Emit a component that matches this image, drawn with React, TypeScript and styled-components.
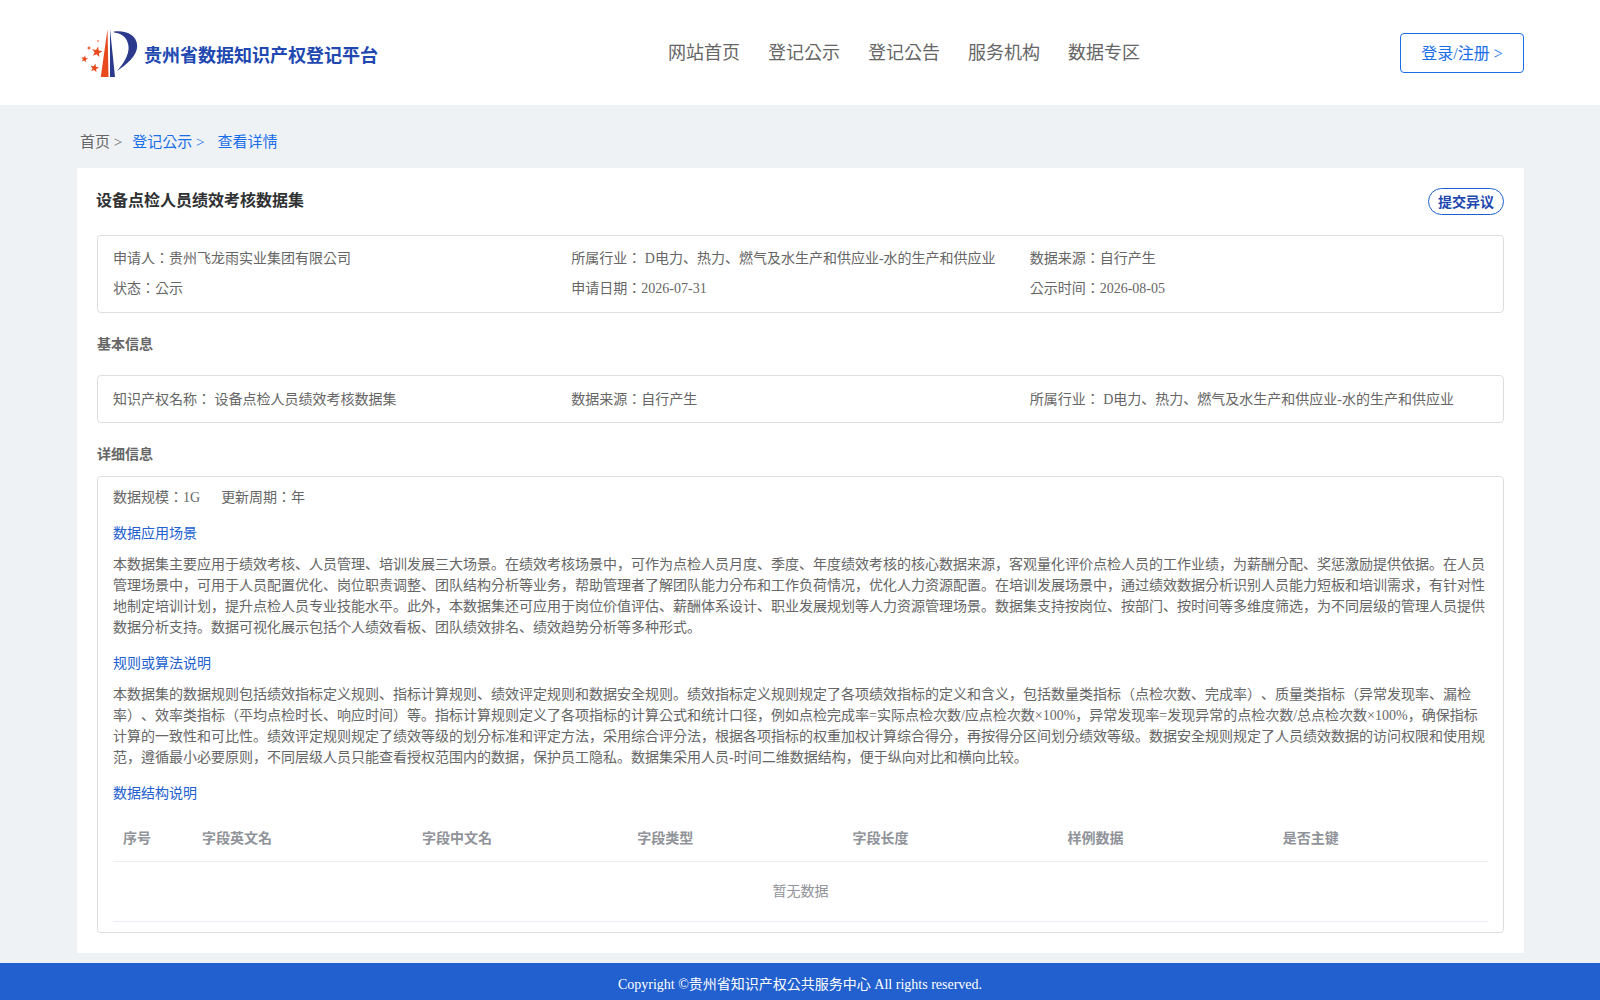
import styled, { createGlobalStyle } from "styled-components";

const tableColumns = ["序号", "字段英文名", "字段中文名", "字段类型", "字段长度", "样例数据", "是否主键"];

const navItems = ["网站首页", "登记公示", "登记公告", "服务机构", "数据专区"];

const summaryItems = [
  "申请人：贵州飞龙雨实业集团有限公司",
  "所属行业： D电力、热力、燃气及水生产和供应业-水的生产和供应业",
  "数据来源：自行产生",
  "状态：公示",
  "申请日期：2026-07-31",
  "公示时间：2026-08-05",
];

const basicItems = [
  "知识产权名称： 设备点检人员绩效考核数据集",
  "数据来源：自行产生",
  "所属行业： D电力、热力、燃气及水生产和供应业-水的生产和供应业",
];

const sceneText =
  "本数据集主要应用于绩效考核、人员管理、培训发展三大场景。在绩效考核场景中，可作为点检人员月度、季度、年度绩效考核的核心数据来源，客观量化评价点检人员的工作业绩，为薪酬分配、奖惩激励提供依据。在人员管理场景中，可用于人员配置优化、岗位职责调整、团队结构分析等业务，帮助管理者了解团队能力分布和工作负荷情况，优化人力资源配置。在培训发展场景中，通过绩效数据分析识别人员能力短板和培训需求，有针对性地制定培训计划，提升点检人员专业技能水平。此外，本数据集还可应用于岗位价值评估、薪酬体系设计、职业发展规划等人力资源管理场景。数据集支持按岗位、按部门、按时间等多维度筛选，为不同层级的管理人员提供数据分析支持。数据可视化展示包括个人绩效看板、团队绩效排名、绩效趋势分析等多种形式。";

const ruleText =
  "本数据集的数据规则包括绩效指标定义规则、指标计算规则、绩效评定规则和数据安全规则。绩效指标定义规则规定了各项绩效指标的定义和含义，包括数量类指标（点检次数、完成率）、质量类指标（异常发现率、漏检率）、效率类指标（平均点检时长、响应时间）等。指标计算规则定义了各项指标的计算公式和统计口径，例如点检完成率=实际点检次数/应点检次数×100%，异常发现率=发现异常的点检次数/总点检次数×100%，确保指标计算的一致性和可比性。绩效评定规则规定了绩效等级的划分标准和评定方法，采用综合评分法，根据各项指标的权重加权计算综合得分，再按得分区间划分绩效等级。数据安全规则规定了人员绩效数据的访问权限和使用规范，遵循最小必要原则，不同层级人员只能查看授权范围内的数据，保护员工隐私。数据集采用人员-时间二维数据结构，便于纵向对比和横向比较。";

const starPoints = (cx: number, cy: number, r: number) =>
  Array.from({ length: 10 }, (_, i) => {
    const radius = i % 2 === 0 ? r : r * 0.42;
    const angle = -Math.PI / 2 + 0.2 + (i * Math.PI) / 5;
    return `${(cx + radius * Math.cos(angle)).toFixed(2)},${(cy + radius * Math.sin(angle)).toFixed(2)}`;
  }).join(" ");

const Logo = () => (
  <svg width="60" height="56" viewBox="0 0 60 56" aria-hidden="true">
    <path d="M27.5 4 L28.5 52 L20.8 52 Z" fill="#e8491d" />
    <path d="M30 4 L35 52 L30 52 Z" fill="#2b3a8c" />
    <path
      d="M34 6.5 C46 5 57 10 57.2 21 C57.2 31 46 40 37 46 C43 39 49.5 30 48.5 21 C47.5 13 42 8 34 7.5 Z"
      fill="#2b3a8c"
    />
    <polygon points={starPoints(17, 27, 5.5)} fill="#e8491d" />
    <polygon points={starPoints(4.5, 34, 3.6)} fill="#e8491d" />
    <polygon points={starPoints(14.5, 43, 4.6)} fill="#e8491d" />
    <circle cx="9" cy="23" r="1.5" fill="#ef6a42" />
    <circle cx="18" cy="16" r="1" fill="#ef8a6a" />
  </svg>
);

const App = () => {
  return (
    <Page>
      <GlobalStyle />
      <Header>
        <Brand>
          <Logo />
          <BrandName>贵州省数据知识产权登记平台</BrandName>
        </Brand>
        <Nav>
          {navItems.map((item) => (
            <NavLink key={item}>{item}</NavLink>
          ))}
        </Nav>
        <LoginButton>登录/注册 &gt;</LoginButton>
      </Header>
      <Main>
        <Breadcrumb>
          <Crumb>首页 &gt;</Crumb>
          <Crumb $active>登记公示 &gt;</Crumb>
          <Crumb $active>查看详情</Crumb>
        </Breadcrumb>
        <Card>
          <TitleRow>
            <Title>设备点检人员绩效考核数据集</Title>
            <ObjectionButton>提交异议</ObjectionButton>
          </TitleRow>
          <InfoBox>
            <InfoGrid>
              {summaryItems.map((item) => (
                <span key={item}>{item}</span>
              ))}
            </InfoGrid>
          </InfoBox>
          <SectionTitle>基本信息</SectionTitle>
          <BasicBox>
            <InfoGrid>
              {basicItems.map((item) => (
                <span key={item}>{item}</span>
              ))}
            </InfoGrid>
          </BasicBox>
          <DetailTitle>详细信息</DetailTitle>
          <DetailBox>
            <MetaRow>
              <span>数据规模：1G</span>
              <span>更新周期：年</span>
            </MetaRow>
            <BlueLabel>数据应用场景</BlueLabel>
            <Paragraph>{sceneText}</Paragraph>
            <BlueLabel>规则或算法说明</BlueLabel>
            <Paragraph>{ruleText}</Paragraph>
            <BlueLabel>数据结构说明</BlueLabel>
            <TableHead>
              {tableColumns.map((column) => (
                <HeadCell key={column}>{column}</HeadCell>
              ))}
            </TableHead>
            <EmptyRow>暂无数据</EmptyRow>
          </DetailBox>
        </Card>
      </Main>
      <Footer>Copyright ©贵州省知识产权公共服务中心 All rights reserved.</Footer>
    </Page>
  );
};

export default App;

const GlobalStyle = createGlobalStyle`
  html, body {
    margin: 0;
    padding: 0;
    background: #eff2f5;
  }

  body {
    font-family: "Liberation Serif", "Noto Sans CJK KR", serif;
    font-size: 14px;
    color: #666;
    text-spacing-trim: space-all;
  }

  * {
    box-sizing: border-box;
  }
`;

const Page = styled.div`
  display: flex;
  flex-direction: column;
  min-height: 1000px;
`;

const Header = styled.header`
  height: 105px;
  padding: 0 76px 0 80px;
  background: #fff;
  display: flex;
  align-items: center;
  justify-content: space-between;
`;

const Brand = styled.div`
  width: 300px;
  display: flex;
  align-items: center;
  gap: 4px;
`;

const BrandName = styled.div`
  font-size: 18px;
  font-weight: 700;
  color: #2148b0;
  white-space: nowrap;
  padding-top: 3px;
`;

const Nav = styled.nav`
  margin-left: 28px;
  padding-bottom: 3px;
  display: flex;
  gap: 28px;
`;

const NavLink = styled.a`
  font-size: 18px;
  color: #666;
`;

const LoginButton = styled.button`
  width: 124px;
  height: 40px;
  padding: 0 6px 2px;
  border: 1px solid #1a6fe8;
  border-radius: 4px;
  background: #fff;
  color: #1a6fe8;
  font-family: inherit;
  font-size: 16px;
`;

const Main = styled.main`
  width: 1447px;
  margin-left: 77px;
`;

const Breadcrumb = styled.div`
  height: 63px;
  padding: 8px 0 0 3px;
  display: flex;
  align-items: center;
  gap: 10px;
  font-size: 15px;
`;

const Crumb = styled.span<{ $active?: boolean }>`
  color: ${(props) => (props.$active ? "#1a6fe8" : "#666")};
  margin-right: ${(props) => (props.$active ? "3px" : "0")};
`;

const Card = styled.section`
  height: 785px;
  padding: 20px;
  background: #fff;
`;

const TitleRow = styled.div`
  height: 47px;
  display: flex;
  justify-content: space-between;
  align-items: flex-start;
`;

const Title = styled.h1`
  margin: 0 0 0 -1px;
  font-size: 16px;
  line-height: 26px;
  font-weight: 700;
  color: #303133;
`;

const ObjectionButton = styled.button`
  width: 76px;
  height: 27px;
  padding: 0 0 2px;
  border: 1px solid #1a60d0;
  border-radius: 14px;
  background: #fff;
  color: #2148b0;
  font-family: inherit;
  font-size: 14px;
  font-weight: 700;
`;

const InfoBox = styled.div`
  height: 78px;
  padding: 12px 15px;
  border: 1px solid #dedede;
  border-radius: 4px;
`;

const InfoGrid = styled.div`
  display: grid;
  grid-template-columns: repeat(3, 1fr);
  row-gap: 9px;
  line-height: 21px;
`;

const SectionTitle = styled.h2`
  margin: 21px 0 20px;
  font-size: 14px;
  line-height: 21px;
  font-weight: 700;
  color: #666;
`;

const BasicBox = styled(InfoBox)`
  height: 48px;
  padding: 13px 15px;
`;

const DetailTitle = styled(SectionTitle)`
  margin: 21px 0 11px;
`;

const DetailBox = styled.div`
  height: 457px;
  padding: 10px 15px;
  border: 1px solid #dedede;
  border-radius: 4px;
`;

const MetaRow = styled.div`
  display: flex;
  gap: 21px;
  line-height: 21px;
`;

const BlueLabel = styled.div`
  margin-top: 15px;
  line-height: 21px;
  color: #2160ce;
`;

const Paragraph = styled.p`
  margin: 10px 0 0;
  line-height: 21px;
  color: #666;
`;

const TableHead = styled.div`
  margin-top: 10px;
  height: 48px;
  display: grid;
  grid-template-columns: 79px 220px repeat(5, 1fr);
  align-items: center;
  border-bottom: 1px solid #ebeef5;
`;

const HeadCell = styled.div`
  padding: 0 0 2px 10px;
  font-weight: 700;
  color: #909399;
`;

const EmptyRow = styled.div`
  height: 60px;
  padding-bottom: 3px;
  display: flex;
  align-items: center;
  justify-content: center;
  border-bottom: 1px solid #ebeef5;
  color: #909399;
`;

const Footer = styled.footer`
  margin-top: 10px;
  flex: 1;
  height: 37px;
  padding-top: 2px;
  background: #2160ce;
  color: #fff;
  display: flex;
  align-items: center;
  justify-content: center;
`;
